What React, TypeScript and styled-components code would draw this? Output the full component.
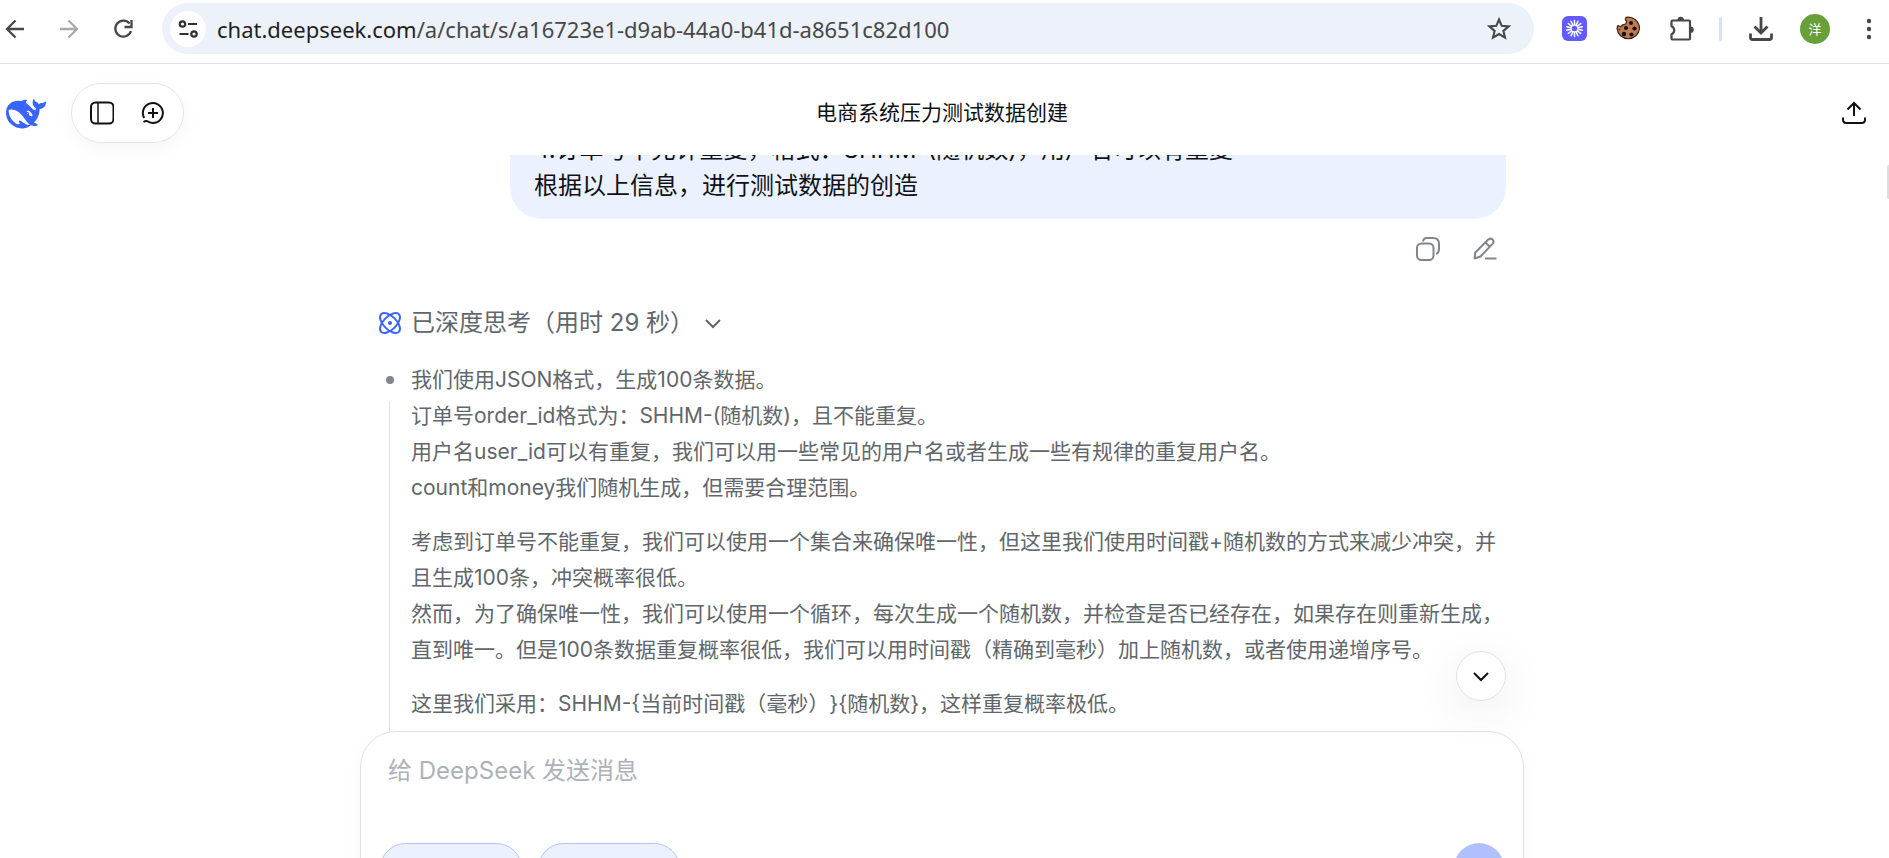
import React from 'react';
import styled, { createGlobalStyle } from 'styled-components';

const GlobalStyle = createGlobalStyle`
  *, *::before, *::after { box-sizing: border-box; }
  html, body { margin: 0; height: 100%; overflow: hidden; }
  #root { height: 100%; }
  body {
    background: #fff;
    color: #0f1115;
    font-family: Inter, "Noto Sans CJK SC", sans-serif;
    font-size: 21px;
    text-spacing-trim: space-all;
  }
  button, textarea { font: inherit; color: inherit; }
  p { margin: 0; }
`;

const Window = styled.div`
  height: 100vh;
  display: flex;
  flex-direction: column;
  overflow: hidden;
`;

const BrowserBar = styled.header`
  flex: none;
  display: flex;
  align-items: center;
  height: 64px;
  padding-bottom: 6px;
  border-bottom: 1px solid #dedfe0;
  color: #474747;
`;

const IconButton = styled.button<{ $w?: number; $color?: string }>`
  flex: none;
  display: flex;
  align-items: center;
  justify-content: center;
  width: ${(p) => p.$w ?? 40}px;
  height: 36px;
  padding: 0;
  border: 0;
  background: none;
  color: ${(p) => p.$color ?? 'inherit'};
  cursor: pointer;
`;

const NavGroup = styled.nav`
  flex: none;
  display: flex;
  gap: 14px;
  width: 167px;
  margin-left: -5px;
`;

const AddressBar = styled.div`
  flex: 1;
  min-width: 0;
  display: flex;
  align-items: center;
  height: 51px;
  padding: 0 15px 0 8px;
  border-radius: 26px;
  background: #ecf1fa;
`;

const SiteInfo = styled.button`
  flex: none;
  display: flex;
  align-items: center;
  justify-content: center;
  width: 36px;
  height: 36px;
  padding: 0;
  border: 0;
  border-radius: 50%;
  background: #fff;
  color: #303030;
`;

const Url = styled.div`
  flex: 1;
  min-width: 0;
  margin-left: 11px;
  overflow: hidden;
  white-space: nowrap;
  font: 22px/30px "Noto Sans", "Open Sans", sans-serif;
  color: #474747;
`;

const Host = styled.span`
  color: #1f1f1f;
`;

const Extensions = styled.div`
  flex: none;
  display: flex;
  align-items: center;
  gap: 14px;
  padding-left: 20px;
`;

const Separator = styled.span`
  width: 3px;
  height: 24px;
  margin: 0 5px 0 3px;
  border-radius: 2px;
  background: #d3e3fd;
`;

const Avatar = styled.span`
  display: flex;
  align-items: center;
  justify-content: center;
  width: 30px;
  height: 30px;
  border-radius: 50%;
  background: #689f38;
  color: #fff;
  font: 13px/30px "Noto Sans CJK SC", sans-serif;
`;

const Page = styled.div`
  flex: 1;
  min-height: 0;
  display: flex;
  flex-direction: column;
  position: relative;
`;

const TopBar = styled.div`
  flex: none;
  display: grid;
  grid-template-columns: 1fr auto 1fr;
  align-items: center;
  height: 91px;
  padding: 0 11px 0 6px;
`;

const TopLeft = styled.div`
  display: flex;
  align-items: center;
  gap: 25px;
  margin-top: 6px;
`;

const TopRight = styled.div`
  display: flex;
  justify-content: flex-end;
  margin-top: 6px;
`;

const Pill = styled.div`
  display: flex;
  align-items: center;
  justify-content: center;
  width: 113px;
  height: 60px;
  border: 1px solid #e4e5e7;
  border-radius: 30px;
  box-shadow: 0 6px 18px rgba(0, 0, 0, 0.04);
`;

const Title = styled.h1`
  margin: 6px 0 0;
  font-size: 21px;
  line-height: 30px;
  font-weight: 400;
`;

const Scroller = styled.main`
  flex: 1;
  min-height: 0;
  display: flex;
  flex-direction: column;
  align-items: center;
  overflow: hidden;
  padding-right: 5px;
`;

const Thread = styled.div`
  flex: 1;
  min-height: 0;
  width: 100%;
  max-width: 1164px;
  padding: 0 18px;
  overflow: hidden;
  display: flex;
  flex-direction: column;
`;

const Message = styled.div`
  flex: none;
  display: flex;
  flex-direction: column;
  justify-content: flex-end;
  align-self: flex-end;
  width: 996px;
  max-width: 100%;
  height: 64px;
  padding: 0 24px 15px;
  overflow: hidden;
  border-radius: 0 0 32px 32px;
  background: #ebf1ff;
  font-size: 24px;
  line-height: 36px;
`;

const MessageActions = styled.div`
  flex: none;
  display: flex;
  justify-content: flex-end;
  gap: 21px;
  padding: 12px 3px 0;
  color: #81858c;
`;

const ThinkToggle = styled.button`
  flex: none;
  display: flex;
  align-items: center;
  height: 36px;
  margin-top: 38px;
  padding: 0;
  border: 0;
  background: none;
  color: #61666b;
  font-size: 24px;
  line-height: 36px;
  align-self: flex-start;
`;

const ThinkLabel = styled.span`
  margin: 0 10px 0 9px;
`;

const Thinking = styled.div`
  flex: none;
  display: flex;
  margin-top: 21px;
  color: #61666b;
`;

const Rail = styled.div`
  flex: none;
  display: flex;
  flex-direction: column;
  align-items: center;
  width: 23px;
  margin-right: 10px;
  padding-top: 14px;

  &::before {
    content: "";
    width: 8px;
    height: 8px;
    margin-bottom: 17px;
    border-radius: 50%;
    background: #81858c;
  }

  &::after {
    content: "";
    flex: 1;
    width: 1px;
    background: #e1e2e4;
  }
`;

const Paragraphs = styled.div`
  display: flex;
  flex-direction: column;
  gap: 18px;
  padding-bottom: 36px;
  line-height: 36px;
`;

const Composer = styled.form`
  flex: none;
  position: relative;
  display: flex;
  flex-direction: column;
  width: 100%;
  max-width: 1164px;
  height: 170px;
  margin-bottom: -43px;
  padding: 21px 19px 6px;
  border: 1px solid #e1e2e4;
  border-radius: 36px;
  background: #fff;
  box-shadow: 0 6px 18px rgba(0, 0, 0, 0.03);
`;

const Input = styled.textarea`
  flex: none;
  height: 72px;
  padding: 0 8px;
  border: 0;
  outline: 0;
  resize: none;
  background: none;
  font-size: 24px;
  line-height: 36px;

  &::placeholder {
    color: #adb2b8;
    opacity: 1;
  }
`;

const Tools = styled.div`
  flex: none;
  display: flex;
  align-items: flex-start;
  gap: 16px;
  margin-top: 18px;
`;

const Chip = styled.button`
  width: 142px;
  height: 51px;
  border: 1px solid #b3c4fd;
  border-radius: 26px;
  background: #ebf1ff;
`;

const Attach = styled.button`
  width: 30px;
  height: 30px;
  margin: 12px 28px 0 0;
  padding: 0;
  border: 0;
  background: none;
  color: #61666b;
`;

const Send = styled.button`
  width: 50px;
  height: 50px;
  border: 0;
  border-radius: 50%;
  background: #b0c0ff;
`;

const SendRow = styled.div`
  display: flex;
  margin-left: auto;
`;

const ScrollDown = styled.button`
  position: absolute;
  right: 17px;
  bottom: 100%;
  margin-bottom: 31px;
  display: flex;
  align-items: center;
  justify-content: center;
  width: 50px;
  height: 50px;
  padding: 0;
  border: 1px solid #e1e2e4;
  border-radius: 50%;
  background: #fff;
  box-shadow: 0 12px 48px rgba(0, 0, 0, 0.08);
`;

const ScrollThumb = styled.span`
  position: absolute;
  right: 0;
  top: 101px;
  width: 2px;
  height: 34px;
  border-radius: 2px 0 0 2px;
  background: #dcdddf;
`;

type IconProps = { size?: number; width?: number; children: React.ReactNode };

const Stroke = ({ size = 24, width = 2, children }: IconProps) => (
  <svg
    width={size}
    height={size}
    viewBox={`0 0 ${size} ${size}`}
    fill="none"
    stroke="currentColor"
    strokeWidth={width}
    aria-hidden="true"
  >
    {children}
  </svg>
);

const BackIcon = () => (
  <Stroke width={2.3}><path d="M21 12H5M12.5 3.5 4 12l8.5 8.5" /></Stroke>
);
const ForwardIcon = () => (
  <Stroke width={2.3}><path d="M3 12h16M11.5 3.5 20 12l-8.5 8.5" /></Stroke>
);
const ReloadIcon = () => (
  <Stroke width={2.3}><path d="M18.500 6.500A8 8 0 1 0 20 14" /><path d="M20.500 3v7h-7" /></Stroke>
);
const TuneIcon = () => (
  <Stroke width={2.2}>
    <circle cx="6.500" cy="7" r="2.700" /><path d="M12 7h9M3.500 17h9" /><circle cx="18" cy="17" r="2.700" />
  </Stroke>
);
const StarIcon = () => (
  <Stroke width={2.1}>
    <path d="m12 2.500 2.700 6.300 6.900.6-5.200 4.500 1.600 6.700-6-3.600-6 3.600 1.600-6.700-5.200-4.500 6.900-.6z" />
  </Stroke>
);
const BurstIcon = () => (
  <svg width="25" height="25" viewBox="0 0 25 25" aria-hidden="true">
    <rect width="25" height="25" rx="6" fill="#635bff" />
    <g stroke="#fff" strokeWidth="1.500" strokeLinecap="round">
      {Array.from({ length: 14 }, (_, i) => (
        <path key={i} d="M12.500 4.500v4.500" transform={`rotate(${(i * 360) / 14} 12.500 12.500)`} />
      ))}
    </g>
    <circle cx="12.500" cy="12.500" r="3.600" fill="none" stroke="#fff" strokeWidth="1" />
  </svg>
);
const CookieIcon = () => (
  <svg width="25" height="25" viewBox="0 0 25 25" aria-hidden="true">
    <path
      d="M10 1.300c7-1.300 13.500 4 13.500 11.200A11.300 11.300 0 0 1 1 12.500l.8-3 2.700 1.300 2.200-2 3-.8 1-2.600-1.400-1.800z"
      fill="#c07a56" stroke="#3a2418" strokeWidth="1.200" strokeLinejoin="round"
    />
    <g fill="#17100c">
      <circle cx="15" cy="7" r="2" /><circle cx="10" cy="12" r="2.100" /><circle cx="18.500" cy="12.500" r="2.100" />
      <circle cx="8" cy="18" r="2.200" /><circle cx="15.500" cy="18.500" r="2.100" /><circle cx="3.500" cy="13.500" r=".8" />
    </g>
  </svg>
);
const PuzzleIcon = () => (
  <svg width="26" height="26" viewBox="0 0 26 26" aria-hidden="true">
    <path
      d="M2.500 5.500q0-1 1-1H20q1 0 1 1v17q0 1-1 1H3.500q-1 0-1-1v-4.300a4.300 4.300 0 0 0 0-8z"
      fill="none" stroke="#474747" strokeWidth="2.200" strokeLinejoin="round"
    />
    <path d="M8.500 4a3.200 3.200 0 0 1 6.400 0zM21.500 10.500a3.200 3.200 0 0 1 0 6.400z" fill="#474747" />
  </svg>
);
const DownloadIcon = () => (
  <Stroke width={2.8}><path d="M12 0v15M5.500 9.500 12 16l6.500-6.500M1.500 16.500v4q0 2 2 2h17q2 0 2-2v-4" /></Stroke>
);
const DotsIcon = () => (
  <svg width="6" height="22" viewBox="0 0 6 22" fill="#474747" aria-hidden="true">
    <circle cx="3" cy="3" r="2.200" /><circle cx="3" cy="11" r="2.200" /><circle cx="3" cy="19" r="2.200" />
  </svg>
);
const WhaleLogo = () => (
  <svg width="40" height="40" viewBox="0 -0.6 24 24" fill="#3964fe" role="img" aria-label="DeepSeek">
    <path d="M23.748 4.482c-.254-.124-.364.113-.512.234-.051.039-.094.09-.137.136-.372.397-.806.657-1.373.626-.829-.046-1.537.214-2.163.848-.133-.782-.575-1.248-1.247-1.548-.352-.156-.708-.311-.955-.65-.172-.241-.219-.51-.305-.774-.055-.16-.11-.323-.293-.35-.2-.031-.278.136-.356.276-.313.572-.434 1.202-.422 1.840.027 1.436.633 2.580 1.838 3.393.137.093.172.187.129.323-.082.28-.18.552-.266.833-.055.179-.137.217-.329.14a5.526 5.526 0 0 1-1.736-1.180c-.857-.828-1.631-1.742-2.597-2.458a11.365 11.365 0 0 0-.689-.471c-.985-.957.13-1.743.388-1.836.27-.098.093-.432-.779-.428-.872.004-1.670.295-2.687.684a3.055 3.055 0 0 1-.465.137 9.597 9.597 0 0 0-2.883-.102c-1.885.21-3.390 1.102-4.497 2.623C.082 8.606-.231 10.684.152 12.850c.403 2.284 1.569 4.175 3.360 5.653 1.858 1.533 3.997 2.284 6.438 2.140 1.482-.085 3.133-.284 4.994-1.860.47.234.962.327 1.780.397.63.059 1.236-.03 1.705-.128.735-.156.684-.837.419-.961-2.155-1.004-1.682-.595-2.113-.926 1.096-1.296 2.746-2.642 3.392-7.003.05-.347.007-.565 0-.845-.004-.17.035-.237.23-.256a4.173 4.173 0 0 0 1.545-.475c1.396-.763 1.960-2.015 2.093-3.517.02-.23-.004-.467-.247-.588zM11.581 18c-2.089-1.642-3.102-2.183-3.520-2.160-.392.024-.321.471-.235.763.09.288.207.486.371.739.114.167.192.416-.113.603-.673.416-1.842-.14-1.897-.167-1.361-.802-2.500-1.860-3.301-3.307-.774-1.393-1.224-2.887-1.298-4.482-.02-.386.093-.522.477-.592a4.696 4.696 0 0 1 1.529-.039c2.132.312 3.946 1.265 5.468 2.774.868.86 1.525 1.887 2.202 2.891.72 1.066 1.494 2.082 2.480 2.914.348.292.625.514.891.677-.802.09-2.140.11-3.054-.614zm1-6.440a.306.306 0 0 1 .415-.287.302.302 0 0 1 .2.288.306.306 0 0 1-.31.307.303.303 0 0 1-.304-.308zm3.110 1.596c-.2.081-.399.151-.59.16a1.245 1.245 0 0 1-.798-.254c-.274-.23-.47-.358-.552-.758a1.730 1.730 0 0 1 .016-.588c.07-.327-.008-.537-.239-.727-.187-.156-.426-.199-.688-.199a.559.559 0 0 1-.254-.078c-.11-.054-.2-.19-.114-.358.028-.054.16-.186.192-.21.356-.202.767-.136 1.146.016.352.144.618.408 1.001.782.391.451.462.576.685.914.176.265.336.537.445.848.067.195-.019.354-.25.452z" />
  </svg>
);
const SidebarIcon = () => (
  <Stroke><rect x="1" y="1.500" width="22.500" height="21" rx="4.500" /><path d="M8 2v20.500" strokeWidth="1.500" /></Stroke>
);
const NewChatIcon = () => (
  <Stroke>
    <path d="M3.200 17A10 10 0 1 1 12 22c-2 0-3.500-.5-5-1.500-1.200-.8-2.500-.8-4.500.5M12 7v10M7 12h10" />
  </Stroke>
);
const ShareIcon = () => (
  <Stroke>
    <path d="M12 15V2M5.500 8.500 12 2l6.500 6.500M1 16.500v2q0 3.500 3.500 3.500h15q3.500 0 3.500-3.500v-2" />
  </Stroke>
);
const CopyIcon = () => (
  <Stroke width={2}>
    <rect x="1" y="6.500" width="16.500" height="16.500" rx="4.500" />
    <path d="M7 4.500Q7.500 1 11 1h6q6 0 6 6v5q0 4-3 5" />
  </Stroke>
);
const PencilIcon = () => (
  <Stroke width={2}>
    <path d="M1.500 21.500 2.300 15.500 15.500 2.300q2-1.500 4 .3t.3 4L7.500 19.500zM12.500 5.500l4.500 4.500M12 21.500h11.500" strokeLinejoin="round" />
  </Stroke>
);
const AtomIcon = () => (
  <Stroke width={2}>
    <ellipse cx="12" cy="12" rx="12.500" ry="6.500" transform="rotate(45 12 12)" />
    <ellipse cx="12" cy="12" rx="12.500" ry="6.500" transform="rotate(-45 12 12)" />
    <circle cx="12" cy="12" r="2.100" fill="currentColor" stroke="none" />
  </Stroke>
);
const ChevronIcon = () => (
  <Stroke size={18}><path d="m2 6 7 7 7-7" /></Stroke>
);
const ClipIcon = () => (
  <Stroke><path d="M7 12V8a4 4 0 0 1 8 0v9" /></Stroke>
);

const BlueMark = styled.span`
  display: flex;
  color: #3964fe;
`;

const thoughts: string[][] = [
  [
    '我们使用JSON格式，生成100条数据。',
    '订单号order_id格式为：SHHM-(随机数)，且不能重复。',
    '用户名user_id可以有重复，我们可以用一些常见的用户名或者生成一些有规律的重复用户名。',
    'count和money我们随机生成，但需要合理范围。',
  ],
  [
    '考虑到订单号不能重复，我们可以使用一个集合来确保唯一性，但这里我们使用时间戳+随机数的方式来减少冲突，并且生成100条，冲突概率很低。',
    '然而，为了确保唯一性，我们可以使用一个循环，每次生成一个随机数，并检查是否已经存在，如果存在则重新生成，直到唯一。但是100条数据重复概率很低，我们可以用时间戳（精确到毫秒）加上随机数，或者使用递增序号。',
  ],
  ['这里我们采用：SHHM-{当前时间戳（毫秒）}{随机数}，这样重复概率极低。'],
];

export default function App() {
  return (
    <Window>
      <GlobalStyle />
      <BrowserBar>
        <NavGroup>
          <IconButton aria-label="后退"><BackIcon /></IconButton>
          <IconButton aria-label="前进" $color="#ababab"><ForwardIcon /></IconButton>
          <IconButton aria-label="重新加载"><ReloadIcon /></IconButton>
        </NavGroup>
        <AddressBar>
          <SiteInfo aria-label="网站信息"><TuneIcon /></SiteInfo>
          <Url><Host>chat.deepseek.com</Host>/a/chat/s/a16723e1-d9ab-44a0-b41d-a8651c82d100</Url>
          <IconButton aria-label="收藏"><StarIcon /></IconButton>
        </AddressBar>
        <Extensions>
          <IconButton aria-label="扩展"><BurstIcon /></IconButton>
          <IconButton aria-label="Cookie"><CookieIcon /></IconButton>
          <IconButton aria-label="扩展程序"><PuzzleIcon /></IconButton>
          <Separator />
          <IconButton aria-label="下载"><DownloadIcon /></IconButton>
          <IconButton aria-label="个人资料"><Avatar>洋</Avatar></IconButton>
          <IconButton aria-label="菜单"><DotsIcon /></IconButton>
        </Extensions>
      </BrowserBar>
      <Page>
        <TopBar>
          <TopLeft>
            <WhaleLogo />
            <Pill>
              <IconButton aria-label="侧边栏" $w={51}><SidebarIcon /></IconButton>
              <IconButton aria-label="新对话" $w={51}><NewChatIcon /></IconButton>
            </Pill>
          </TopLeft>
          <Title>电商系统压力测试数据创建</Title>
          <TopRight>
            <IconButton aria-label="分享" $w={48}><ShareIcon /></IconButton>
          </TopRight>
        </TopBar>
        <Scroller>
          <Thread>
            <Message>
              <p>4.订单号不允许重复，格式：SHHM-(随机数)，用户名可以有重复</p>
              <p>根据以上信息，进行测试数据的创造</p>
            </Message>
            <MessageActions>
              <IconButton aria-label="复制" $w={36}><CopyIcon /></IconButton>
              <IconButton aria-label="编辑" $w={36}><PencilIcon /></IconButton>
            </MessageActions>
            <ThinkToggle aria-expanded="true">
              <BlueMark><AtomIcon /></BlueMark>
              <ThinkLabel>已深度思考（用时 29 秒）</ThinkLabel>
              <ChevronIcon />
            </ThinkToggle>
            <Thinking>
              <Rail />
              <Paragraphs>
                {thoughts.map((lines, i) => (
                  <div key={i}>
                    {lines.map((line) => <p key={line}>{line}</p>)}
                  </div>
                ))}
              </Paragraphs>
            </Thinking>
          </Thread>
          <Composer>
            <ScrollDown type="button" aria-label="滚动到底部"><ChevronIcon /></ScrollDown>
            <Input aria-label="消息" placeholder="给 DeepSeek 发送消息" />
            <Tools>
              <Chip type="button" aria-label="深度思考" />
              <Chip type="button" aria-label="联网搜索" />
              <SendRow>
                <Attach type="button" aria-label="附件"><ClipIcon /></Attach>
                <Send type="button" aria-label="发送" />
              </SendRow>
            </Tools>
          </Composer>
        </Scroller>
        <ScrollThumb />
      </Page>
    </Window>
  );
}
